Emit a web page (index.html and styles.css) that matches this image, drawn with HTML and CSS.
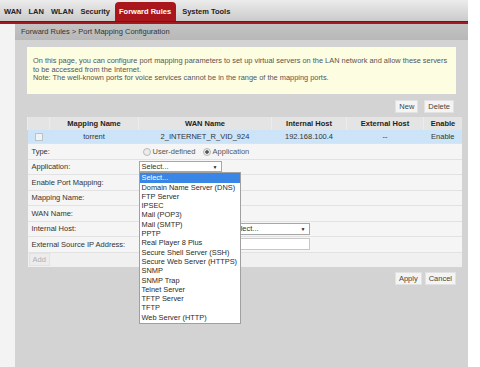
FILE: index.html
```html
<!DOCTYPE html>
<html lang="en">
<head>
    <meta charset="UTF-8">
    <title>Port Mapping Configuration</title>
    <link rel="stylesheet" href="styles.css">
</head>
<body>
    <div class="page">
        <div class="topbar">
            <span class="tab">WAN</span>
            <span class="tab">LAN</span>
            <span class="tab">WLAN</span>
            <span class="tab">Security</span>
            <span class="tab active">Forward Rules</span>
            <span class="tab">System Tools</span>
        </div>
        <div class="redline"></div>
        <div class="main">
            <div class="side"></div>
            <div class="content">
                <div class="crumb">Forward Rules &gt; Port Mapping Configuration</div>
                <div class="inner">
                    <div class="info">
                        On this page, you can configure port mapping parameters to set up virtual servers on the LAN network and allow these servers<br>
                        to be accessed from the Internet.<br>
                        Note: The well-known ports for voice services cannot be in the range of the mapping ports.
                    </div>
                    <div class="toolbar">
                        <button class="btn">New</button>
                        <button class="btn">Delete</button>
                    </div>
                    <table class="grid">
                        <tr class="head">
                            <th class="c-check"></th>
                            <th class="c-name">Mapping Name</th>
                            <th class="c-wan">WAN Name</th>
                            <th class="c-int">Internal Host</th>
                            <th class="c-ext">External Host</th>
                            <th class="c-en">Enable</th>
                        </tr>
                        <tr class="sel">
                            <td><span class="check"></span></td>
                            <td>torrent</td>
                            <td>2_INTERNET_R_VID_924</td>
                            <td>192.168.100.4</td>
                            <td>--</td>
                            <td>Enable</td>
                        </tr>
                        <tr class="form">
                            <td class="label" colspan="2">Type:</td>
                            <td class="value" colspan="4">
                                <span class="radio"></span><span class="rlabel">User-defined</span>
                                <span class="radio on"></span><span class="rlabel">Application</span>
                            </td>
                        </tr>
                        <tr class="form">
                            <td class="label" colspan="2">Application:</td>
                            <td class="value" colspan="4">
                                <div class="selwrap">
                                    <span class="select app">Select...<span class="arrow">&#9660;</span></span>
                                    <ul class="options">
                                        <li class="hl">Select...</li>
                                        <li>Domain Name Server (DNS)</li>
                                        <li>FTP Server</li>
                                        <li>IPSEC</li>
                                        <li>Mail (POP3)</li>
                                        <li>Mail (SMTP)</li>
                                        <li>PPTP</li>
                                        <li>Real Player 8 Plus</li>
                                        <li>Secure Shell Server (SSH)</li>
                                        <li>Secure Web Server (HTTPS)</li>
                                        <li>SNMP</li>
                                        <li>SNMP Trap</li>
                                        <li>Telnet Server</li>
                                        <li>TFTP Server</li>
                                        <li>TFTP</li>
                                        <li>Web Server (HTTP)</li>
                                    </ul>
                                </div>
                            </td>
                        </tr>
                        <tr class="form">
                            <td class="label" colspan="2">Enable Port Mapping:</td>
                            <td class="value" colspan="4"></td>
                        </tr>
                        <tr class="form">
                            <td class="label" colspan="2">Mapping Name:</td>
                            <td class="value" colspan="4"></td>
                        </tr>
                        <tr class="form">
                            <td class="label" colspan="2">WAN Name:</td>
                            <td class="value" colspan="4"></td>
                        </tr>
                        <tr class="form">
                            <td class="label" colspan="2">Internal Host:</td>
                            <td class="value" colspan="4">
                                <span class="input host"></span><span class="select hostsel">Select...<span class="arrow">&#9660;</span></span>
                            </td>
                        </tr>
                        <tr class="form">
                            <td class="label" colspan="2">External Source IP Address:</td>
                            <td class="value" colspan="4"><span class="input extip"></span></td>
                        </tr>
                        <tr class="form last">
                            <td colspan="6"><button class="btn dim">Add</button></td>
                        </tr>
                    </table>
                    <div class="actions">
                        <button class="btn">Apply</button>
                        <button class="btn">Cancel</button>
                    </div>
                </div>
            </div>
        </div>
    </div>
</body>
</html>
```

FILE: styles.css
```css
body {
    margin: 0;
    background-color: #ffffff;
    font-family: "Liberation Sans", Arial, sans-serif;
    font-size: 8px;
    color: #333333;
    overflow: hidden;
}

.page {
    width: 468px;
    height: 367px;
    display: flex;
    flex-direction: column;
}

.topbar {
    height: 21px;
    display: flex;
    align-items: flex-end;
    padding-left: 1px;
    background: linear-gradient(#ececec, #cbcbcb);
}
.tab {
    font-weight: bold;
    font-size: 7.5px;
    color: #222222;
    padding: 0 4px 5px 3px;
}
.tab.active {
    background-color: #a9171c;
    color: #ffffff;
    border-radius: 4px 4px 0 0;
    padding: 5px 5px 5px 4px;
    margin: 0 3px 0 1px;
}

.redline {
    height: 2px;
    background-color: #a21a1f;
    border-top: 1px solid #7d1014;
}

.main {
    flex: 1;
    display: flex;
}
.side {
    width: 15px;
    flex-shrink: 0;
    background-color: #f3f3f3;
}
.content {
    flex: 1;
    min-width: 0;
    background-color: #d3d3d3;
}
.crumb {
    height: 16px;
    line-height: 16px;
    padding-left: 6px;
    font-size: 7.5px;
    background: linear-gradient(#c3c3c3, #b8b8b8);
    color: #333333;
}
.inner {
    padding: 7px 12px 0 12px;
}

.info {
    background-color: #fdfde1;
    color: #555555;
    font-size: 7.4px;
    line-height: 8.5px;
    padding: 10px 6px 10px 6px;
    height: 27px;
    white-space: nowrap;
    overflow: hidden;
}

.toolbar {
    display: flex;
    justify-content: flex-end;
    gap: 6px;
    margin-top: 6px;
    margin-bottom: 4px;
    padding-right: 2px;
}
.btn {
    font-family: "Liberation Sans", Arial, sans-serif;
    font-size: 7.5px;
    color: #444444;
    background-color: #f4f4f4;
    border: 1px solid #e2e2e2;
    padding: 1px 3px;
    height: 13px;
    line-height: 10px;
}
.btn.dim {
    color: #b0b0b0;
    background-color: #ececec;
    margin-left: 1px;
}

.grid {
    width: 100%;
    border-collapse: collapse;
    table-layout: fixed;
    font-size: 7.5px;
}
.grid th {
    background-color: #e4e4e4;
    height: 13px;
    padding: 0;
    font-weight: bold;
    color: #222222;
    border-left: 1px solid #ececec;
}
.c-check { width: 21px; }
.c-name { width: 88px; }
.c-wan { width: 132px; }
.c-int { width: 74px; }
.c-ext { width: 76px; }
.c-en { width: 38px; }

.sel td {
    background-color: #cde3f7;
    height: 13px;
    padding: 0;
    text-align: center;
    color: #333333;
}
.check {
    display: inline-block;
    width: 6px;
    height: 6px;
    border: 1px solid #b9c3cc;
    background-color: #f2f2f2;
    vertical-align: middle;
}

.form td {
    background-color: #f5f5f5;
    border-top: 1px solid #e2e2e2;
    height: 14.5px;
    padding: 0;
    color: #333333;
}
.form .label {
    padding-left: 4px;
}
.form.last td {
    border-top: 1px solid #e2e2e2;
    height: 14px;
    background-color: #f0f0f0;
}

.radio {
    display: inline-block;
    width: 6px;
    height: 6px;
    border-radius: 50%;
    border: 1px solid #b8b8b8;
    background-color: #ececec;
    vertical-align: middle;
    margin: 0 2px 0 4px;
}
.radio.on {
    background: radial-gradient(#555555 35%, #e8e8e8 45%);
    margin-left: 5px;
}
.rlabel {
    vertical-align: middle;
    color: #555555;
}

.selwrap {
    position: relative;
    height: 11px;
}
.select {
    display: inline-flex;
    justify-content: space-between;
    align-items: center;
    box-sizing: border-box;
    height: 11px;
    border: 1px solid #a7a7a7;
    background-color: #ffffff;
    padding: 0 3px 0 2px;
    color: #333333;
    vertical-align: middle;
}
.select.app {
    width: 83px;
}
.arrow {
    font-size: 5px;
    color: #222222;
}
.options {
    position: absolute;
    top: 11px;
    left: 0;
    width: 100px;
    margin: 0;
    padding: 0 0 1px 0;
    list-style: none;
    background-color: #ffffff;
    border: 1px solid #a0a0a0;
    font-size: 7.4px;
    z-index: 2;
}
.options li {
    height: 9.3px;
    line-height: 9.3px;
    padding-left: 2px;
    color: #2a2a2a;
    white-space: nowrap;
}
.options li.hl {
    background-color: #3a86e6;
    color: #ffffff;
}

.input {
    display: inline-block;
    box-sizing: border-box;
    height: 12px;
    border: 1px solid #c8c8c8;
    background-color: #ffffff;
    vertical-align: middle;
}
.input.host {
    width: 88px;
    margin-right: 2px;
}
.select.hostsel {
    width: 81px;
    height: 12px;
}
.input.extip {
    width: 171px;
}

.actions {
    display: flex;
    justify-content: flex-end;
    gap: 3px;
    margin-top: 5px;
}
```
